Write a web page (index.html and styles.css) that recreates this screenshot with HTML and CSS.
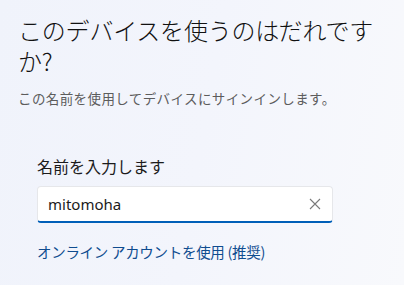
FILE: index.html
```html
<!DOCTYPE html>
<html lang="ja">
<head>
<meta charset="utf-8">
<link rel="stylesheet" href="styles.css">
</head>
<body>
<main class="page">
  <h1 class="title">このデバイスを使うのはだれですか?</h1>
  <p class="subtitle">この名前を使用してデバイスにサインインします。</p>
  <section class="form">
    <label class="label" for="name">名前を入力します</label>
    <div class="field">
      <input id="name" class="input" type="text" value="mitomoha">
      <svg class="clear" width="12" height="12" viewBox="0 0 12 12"><path d="M1 1L11 11M11 1L1 11" stroke="#7a7a7a" stroke-width="1.1" fill="none"/></svg>
    </div>
    <a class="link" href="#">オンライン アカウントを使用 (推奨)</a>
  </section>
</main>
</body>
</html>
```
FILE: styles.css
```css
html, body {
  margin: 0;
  padding: 0;
}
body {
  width: 404px;
  height: 285px;
  overflow: hidden;
  background: linear-gradient(100deg, #f0f3fb 0%, #f3f5fc 50%, #f8f9fc 100%);
  font-family: "Noto Sans CJK JP", "Noto Sans", sans-serif;
  color: #1b1b1b;
}
.page {
  padding: 14px 20px 0 18px;
  width: 366px;
}
.title {
  margin: 0;
  font-size: 24px;
  font-weight: 300;
  line-height: 31px;
  letter-spacing: -0.2px;
  color: #111111;
}
.subtitle {
  margin: 13px 0 0;
  font-size: 13.5px;
  line-height: 18px;
  color: #5c5c5c;
  letter-spacing: 0.4px;
}
.form {
  padding: 48px 0 0 19px;
  display: flex;
  flex-direction: column;
  align-items: flex-start;
}
.label {
  font-size: 16px;
  line-height: 22px;
  color: #1b1b1b;
}
.field {
  margin-top: 9px;
  width: 296px;
  height: 37px;
  box-sizing: border-box;
  background: #ffffff;
  border: 1px solid #e6e7ea;
  border-bottom: 2px solid #005fb8;
  border-radius: 4px;
  display: flex;
  align-items: center;
  padding: 0 10px 0 10px;
}
.input {
  flex: 1;
  border: 0;
  outline: none;
  background: transparent;
  font-family: "Segoe UI", "Noto Sans", sans-serif;
  font-size: 15px;
  color: #1b1b1b;
  padding: 0;
  min-width: 0;
}
.clear {
  flex: none;
  margin-right: 1px;
}
.link {
  margin-top: 19px;
  font-size: 14.5px;
  line-height: 20px;
  color: #0f4c8f;
  text-decoration: none;
  letter-spacing: -0.3px;
}
```
